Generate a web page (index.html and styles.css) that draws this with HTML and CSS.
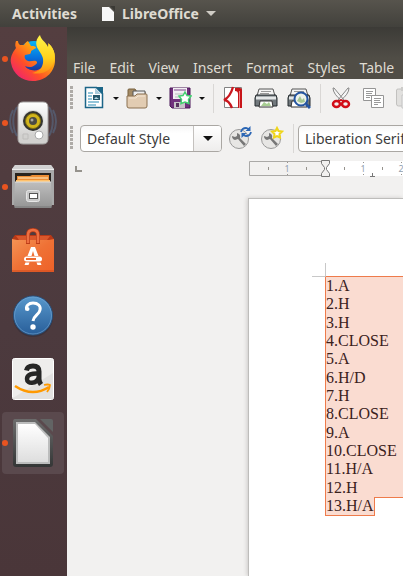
FILE: index.html
```html
<!DOCTYPE html>
<html lang="en">
<head>
<meta charset="utf-8">
<meta name="viewport" content="width=device-width, initial-scale=1">
<title>LibreOffice</title>
<link rel="stylesheet" href="styles.css">
</head>
<body>
<header class="topbar">
  <button class="topbar-item">Activities</button>
  <button class="topbar-item app">
    <svg width="14" height="16" viewBox="0 0 14 16"><path d="M1 1h7l5 5v9H1z" fill="#f7f7f7"/><path d="M9 0h5v5z" fill="#3a3934"/></svg>
    <span>LibreOffice</span>
    <svg width="10" height="5" viewBox="0 0 10 5"><path d="M0 0h10L5 5z" fill="#cfccc5"/></svg>
  </button>
</header>
<div class="desktop">
  <nav class="dock" aria-label="Dock">
    <button class="launcher running" aria-label="Firefox">
      <svg width="48" height="48" viewBox="0 0 48 48">
        <defs>
          <linearGradient id="fx" x1="1" y1="0" x2="0" y2="1"><stop offset="0" stop-color="#ffe52e"/><stop offset=".35" stop-color="#ff9f12"/><stop offset=".62" stop-color="#ff4f28"/><stop offset="1" stop-color="#e8128b"/></linearGradient>
          <linearGradient id="fb" x1="0" y1="0" x2="0" y2="1"><stop offset="0" stop-color="#08b6f5"/><stop offset=".5" stop-color="#0870dc"/><stop offset="1" stop-color="#252080"/></linearGradient>
          <linearGradient id="fy" x1="0" y1="0" x2="0" y2="1"><stop offset="0" stop-color="#fff44a"/><stop offset=".6" stop-color="#ffd21c"/><stop offset="1" stop-color="#ff8b16"/></linearGradient>
        </defs>
        <circle cx="25" cy="23" r="17" fill="url(#fb)"/>
        <path d="M7 6C6 9 6 11 7 13 3 18 1 23 2 28c2 11 11 18 22 18 13 0 23-10 22-23 0-6-3-12-7-15 1 8 0 19-5 24-6 6-16 3-18-1 4 2 8 1 10-1 2-1 3-3 1-4-3-1-5 1-8 0-3-1-4-4-3-6l5-1c1-1 1-2 1-3l5-3c0-2-3-2-5-2l-3-5c-2 1-3 2-4 4-2 0-3 0-4 0-1-1-2-2-2-4z" fill="url(#fx)"/>
        <path d="M31 0c-4 4-5 9-2 14 3 5 6 8 5 14-1 6-5 9-11 10 9 2 16-1 20-7 5-8 3-17-3-22l-1 3c-2-5-7-7-8-12z" fill="url(#fy)"/>
      </svg>
    </button>
    <button class="launcher running" aria-label="Rhythmbox">
      <svg width="48" height="48" viewBox="0 0 48 48">
        <defs><linearGradient id="sp" x1="0" y1="0" x2="0" y2="1"><stop offset="0" stop-color="#ffffff"/><stop offset="1" stop-color="#c7c6c4"/></linearGradient></defs>
        <g fill="none" stroke="#58799e" stroke-width="2" opacity=".45"><path d="M8 8c-5 8-5 20 0 29M4 11c-4 7-4 16 0 23M40 8c5 8 5 20 0 29M44 11c4 7 4 16 0 23"/></g>
        <path d="M9 8q0-5 5-5h20q5 0 5 5v32q0 5-5 5H14q-5 0-5-5z" fill="url(#sp)" stroke="#a5a3a2"/>
        <path d="M10 36h28v5q0 3-4 3H14q-4 0-4-3z" fill="#d2d1cf"/>
        <circle cx="24" cy="22" r="11" fill="#dcdcda"/><circle cx="24" cy="22" r="10" fill="#353530"/><circle cx="24" cy="22" r="7.500" fill="#d2b51c" stroke="#80700f"/><circle cx="24" cy="22" r="4" fill="#4b4b44"/><circle cx="23" cy="21" r="1.500" fill="#a9a8a2"/>
        <circle cx="30" cy="36" r="4" fill="#fff" stroke="#aaa"/><path d="M14 35h5v5h-5z" fill="none" stroke="#bebdbb"/>
      </svg>
    </button>
    <button class="launcher running" aria-label="Files">
      <svg width="48" height="48" viewBox="0 0 48 48">
        <defs><linearGradient id="fc" x1="0" y1="0" x2="0" y2="1"><stop offset="0" stop-color="#bebebe"/><stop offset="1" stop-color="#949494"/></linearGradient></defs>
        <path d="M6 2h36l3 4v36H3V6z" fill="#a9a9a9"/><path d="M6 2h36l3 4H3z" fill="#d2d2d2"/><path d="M3 6h42v1H3z" fill="#eee"/>
        <path d="M6 10h36v10H6z" fill="#28231e"/><path d="M8 13h13l2-1h17v7H8z" fill="#ed8e35"/><path d="M9 15h30" stroke="#fff0cc" stroke-width="1"/><path d="M7 17h34v2H7z" fill="#ffc16b"/>
        <path d="M6 19h36l1 23-1 3H6l-1-3z" fill="url(#fc)"/><path d="M6 19h36" stroke="#dedede"/><path d="M5 44h38" stroke="#777"/>
        <rect x="17.500" y="27.500" width="13" height="11" rx="2" fill="#c9c9c9" stroke="#e7e7e7"/><rect x="20.500" y="30.500" width="8" height="5" fill="#fff" stroke="#555"/>
      </svg>
    </button>
    <button class="launcher" aria-label="Ubuntu Software">
      <svg width="48" height="48" viewBox="0 0 48 48">
        <defs><linearGradient id="sw" x1="0" y1="0" x2="1" y2="1"><stop offset="0" stop-color="#f49455"/><stop offset=".5" stop-color="#ef7135"/><stop offset="1" stop-color="#ee6128"/></linearGradient></defs>
        <path d="M3 12l3-4h36l3 4v4H3z" fill="#b83917"/><path d="M7 9h34l-3 4H10z" fill="#d9572b"/>
        <path d="M3 12l5 1h32l5-1v33H3z" fill="url(#sw)"/><path d="M3 44h42" stroke="#cc4a1e"/>
        <path d="M19 17V8q0-5 5-5t5 5v9" fill="none" stroke="#bd3d18" stroke-width="4"/><path d="M19 16V8q0-5 5-5t5 5v8" fill="none" stroke="#ed7042" stroke-width="2.500"/>
        <path d="M18.500 29l3.500-9h4l3.500 9h-4L24 24l-1.500 5zM15.500 38l1-2.500h4l-1 2.500zM32.500 38l-1-2.500h-4l1 2.500z" fill="#fff"/><rect x="15" y="29.500" width="18" height="5" rx="2.500" fill="#fff"/><path d="M17 32h10" stroke="#ed6a30" stroke-width="2"/>
      </svg>
    </button>
    <button class="launcher" aria-label="Help">
      <svg width="48" height="48" viewBox="0 0 48 48">
        <defs><linearGradient id="hp" x1="0" y1="0" x2="0" y2="1"><stop offset="0" stop-color="#5898cc"/><stop offset="1" stop-color="#285e99"/></linearGradient></defs>
        <circle cx="24" cy="26" r="20" fill="#302c38" opacity=".5"/><circle cx="24" cy="24.500" r="19.500" fill="url(#hp)" stroke="#264f7c"/><circle cx="24" cy="24.500" r="18.500" fill="none" stroke="#76a9d3" opacity=".6"/>
        <path d="M18 19c-2-4 2-7 6-7 5 0 8 3 7 7-1 5-6 5-7 11" fill="none" stroke="#fff" stroke-width="3"/><circle cx="18.500" cy="18" r="2" fill="#fff"/><circle cx="24" cy="36" r="2.700" fill="#fff"/>
      </svg>
    </button>
    <button class="launcher" aria-label="Amazon">
      <svg width="48" height="48" viewBox="0 0 48 48">
        <rect x="3.500" y="3.500" width="41" height="41" rx="2" fill="#eeedec" stroke="#fff"/><path d="M4 43L44 18v26H4z" fill="#e2e1e0"/>
        <path d="M17.500 15.500c.5-3 3-4.500 6.500-4.500 4 0 6 2 6 5.500v7.500c0 2.500.5 3.500 2 5.500" fill="none" stroke="#262626" stroke-width="5"/>
        <path d="M30 18.500c-7-.5-12 1-12 5.500 0 5.500 9.500 5 11.500-1" fill="none" stroke="#262626" stroke-width="4.500"/>
        <path d="M6 31c12 8 23 8 34 1" fill="none" stroke="#ff9900" stroke-width="2.500"/><path d="M35 30q4-1 6 0 0 3-3 7" fill="none" stroke="#ff9900" stroke-width="1.800"/>
      </svg>
    </button>
    <button class="launcher running active" aria-label="LibreOffice">
      <svg width="48" height="48" viewBox="0 0 48 48">
        <defs><linearGradient id="lo" x1="0" y1="0" x2="0" y2="1"><stop offset="0" stop-color="#6c6c6c"/><stop offset="1" stop-color="#343636"/></linearGradient><linearGradient id="lp" x1="0" y1="0" x2="0" y2="1"><stop offset="0" stop-color="#fff"/><stop offset="1" stop-color="#dedede"/></linearGradient></defs>
        <path d="M6 0h21l17 17v28q0 3-3 3H7q-3 0-3-3V3q0-3 2-3z" fill="url(#lo)"/><path d="M31 0h11q2 0 2 2v11z" fill="#626464"/>
        <path d="M7 3h19l15 15v27H7z" fill="#bcbdbd"/><path d="M9 5h17l13 14v24H9z" fill="url(#lp)"/>
      </svg>
    </button>
  </nav>
  <main class="window">
    <nav class="menubar" aria-label="Menu">
      <button>File</button><button>Edit</button><button>View</button><button>Insert</button><button>Format</button><button>Styles</button><button>Table</button>
    </nav>
    <div class="toolbar standard">
      <span class="grip"></span>
      <button class="tool" aria-label="New"><svg width="24" height="24" viewBox="0 0 24 24"><path d="M3.500 1.500h11l6 6v14h-17z" fill="#fff" stroke="#1c6688" stroke-width="1.500"/><path d="M13 1h8v8z" fill="#1c6688"/><path d="M13 2v6h6z" fill="#a9cbdc"/><path d="M6 7h5M6 10h4M6 13h4M6 16h11M6 19h8" stroke="#268bb5"/><path d="M11 9h7v5h-7z" fill="#24576c"/><path d="M12 13l2-2 3 2z" fill="#b8dae5"/></svg></button>
      <button class="drop" aria-label="New options"></button>
      <button class="tool" aria-label="Open"><svg width="24" height="24" viewBox="0 0 24 24"><path d="M3 20V4q0-1 1-1h6l2 3h8v14z" fill="#a38a65" stroke="#78613f"/><path d="M8 5h12v8H8z" fill="#eee" stroke="#555"/><path d="M2 10h8l2-2h9q1 0 1 1v11q0 2-2 2H4q-2 0-2-2z" fill="#e2ccb2" stroke="#8b7150"/><path d="M4 12h7l2-2h7" fill="none" stroke="#f5e6d3"/></svg></button>
      <button class="drop" aria-label="Open options"></button>
      <button class="tool" aria-label="Save"><svg width="24" height="24" viewBox="0 0 24 24"><path d="M2 2h20v20H4l-2-2z" fill="#71307d" stroke="#4b1758"/><path d="M5 2h14v11H5z" fill="#f2eff3"/><path d="M6 3h12v2H6z" fill="#b89bbf"/><path d="M7 8h8M7 11h6" stroke="#bbb"/><path d="M6 16h11v6H6z" fill="#c8c3c9"/><path d="M8 17h3v4H8z" fill="#58305f"/><path d="M17 6l2 3.500 4 .5-2.500 3.500.5 4-4-1.500-4 1.500.5-4L11 10l4-.5z" fill="#fff" stroke="#43d070" stroke-width="1.500"/></svg></button>
      <button class="drop" aria-label="Save options"></button>
      <span class="divider"></span>
      <button class="tool" aria-label="Export as PDF"><svg width="24" height="24" viewBox="0 0 24 24"><path d="M3.500 1.500h17v20h-17z" fill="#fff" stroke="#828282"/><path d="M14 2q7-1 7 2v18h-4V8q0-3-3-3z" fill="#c81519"/><path d="M12 1C10 8 7 12 3 14c4 0 6 3 8 8" fill="none" stroke="#c9171e" stroke-width="2.300"/><path d="M18.500 5v17" stroke="#e98a8c" stroke-width="1"/></svg></button>
      <button class="tool" aria-label="Print"><svg width="24" height="24" viewBox="0 0 24 24"><path d="M5 3h14l2 7H3z" fill="#f4f4f4" stroke="#555"/><path d="M7 5.500h10M6 7.500h9" stroke="#999"/><path d="M2 9h20l1 3v8H1v-8z" fill="#71787c" stroke="#252b2e"/><path d="M2 12h20" stroke="#e4e7e8" stroke-width="3"/><path d="M6 15h12l1 6H5z" fill="#fff" stroke="#333"/><path d="M7 20l3-4 3 2 2-2 2 4z" fill="#a8ce93"/></svg></button>
      <button class="tool" aria-label="Print preview"><svg width="24" height="24" viewBox="0 0 24 24"><path d="M5 3h14l2 7H3z" fill="#f4f4f4" stroke="#555"/><path d="M7 5.500h10" stroke="#999"/><path d="M2 9h20l1 3v8H1v-8z" fill="#71787c" stroke="#252b2e"/><path d="M2 12h20" stroke="#e4e7e8" stroke-width="3"/><path d="M5 15h14l1 6H4z" fill="#fff" stroke="#333"/><circle cx="14" cy="13" r="6.500" fill="#edf2ec" stroke="#2454a0" stroke-width="2"/><path d="M19 18l4 4" stroke="#2454a0" stroke-width="3"/><path d="M10 15l3-5 2 4 2-2 1 4-4 1z" fill="#a5c792"/></svg></button>
      <span class="divider wide"></span>
      <button class="tool" aria-label="Cut"><svg width="24" height="24" viewBox="0 0 24 24"><path d="M5 2q0 6 9 13l2-1L6 2zM21 2q0 6-9 13l-2-1L20 2z" fill="#f5f5f5" stroke="#878787"/><ellipse cx="8.500" cy="18" rx="3.500" ry="3" fill="none" stroke="#d20d18" stroke-width="2.500"/><ellipse cx="17.500" cy="18" rx="3.500" ry="3" fill="none" stroke="#d20d18" stroke-width="2.500"/><path d="M10 15l3-1 3 1" fill="none" stroke="#d20d18" stroke-width="1.500"/></svg></button>
      <button class="tool" aria-label="Copy"><svg width="24" height="24" viewBox="0 0 24 24"><path d="M2.500 2.500h12v12h-12z" fill="#fff" stroke="#959595"/><path d="M5 5.500h7M5 7.500h6M5 9.500h7M5 11.500h4" stroke="#999"/><path d="M10.500 9.500h12v12h-12z" fill="#fff" stroke="#959595"/><path d="M13 12.500h7M13 14.500h6M13 16.500h7M13 18.500h4" stroke="#999"/></svg></button>
      <button class="tool faded" aria-label="Paste" disabled><svg width="24" height="24" viewBox="0 0 24 24"><path d="M2.500 4q0-1 2-1h15v17h-15q-2 0-2-2z" fill="#dddcda" stroke="#b7b6b4"/><path d="M7 1h9v4H7z" fill="#c4c3c1"/><path d="M8 9h15v13H8z" fill="#eee" stroke="#bbb"/></svg></button>
    </div>
    <div class="toolbar formatting">
      <span class="grip"></span>
      <label class="combo"><select aria-label="Paragraph style"><option>Default Style</option></select><span class="combo-arrow"></span></label>
      <button class="tool" aria-label="Update style"><svg width="24" height="24" viewBox="0 0 24 24"><circle cx="11" cy="13" r="9.500" fill="#e7e6e4" stroke="#999"/><path d="M4 10q0 3 3 4l3-1 6 7 2-2-6-6q1-4-3-5v3l-2 1z" fill="#777"/><path d="M13 6q1-4 5-4l3 1M23 6q-1 4-5 4l-3-1" fill="none" stroke="#2c67b5" stroke-width="1.800"/><path d="M22.500 0v5h-5zM13.500 12V7h5z" fill="#2c67b5"/></svg></button>
      <button class="tool" aria-label="New style"><svg width="24" height="24" viewBox="0 0 24 24"><circle cx="11" cy="13" r="9.500" fill="#e7e6e4" stroke="#999"/><path d="M4 10q0 3 3 4l3-1 6 7 2-2-6-6q1-4-3-5v3l-2 1z" fill="#777"/><path d="M17 2l1.500 3 3.500.5-2.500 2.500.5 3.500-3-1.500-3 1.500.5-3.500L12 5.500l3.500-.5z" fill="#fff" stroke="#efd51a" stroke-width="2"/></svg></button>
      <span class="divider"></span>
      <label class="combo font"><select aria-label="Font name"><option>Liberation Serif</option></select></label>
    </div>
    <div class="ruler">
      <svg class="tabstop" width="7" height="6" viewBox="0 0 7 6"><path d="M1 0v5h6" fill="none" stroke="#96938d" stroke-width="2"/></svg>
      <div class="scale">
        <svg width="160" height="18" viewBox="0 0 160 18">
          <path d="M76 1h84v15H76z" fill="#fff"/><path d="M.500 1.500h76v14H.500z" fill="#f2f1f0" stroke="#aaa9a7"/>
          <path d="M19.500 7v3M57.500 7v3M95.500 7v3M133.500 7v3M38.500 2v1M38.500 14v1M114.500 2v1M114.500 14v1M152.500 2v1M152.500 14v1" stroke="#96938d"/>
          <text x="38" y="12">1</text><text x="114" y="12">1</text><text x="152" y="12">2</text>
          <path d="M72.500.500h8v3l-3 4v2l3 4v3h-8v-3l3-4v-2l-3-4z" fill="#f2f1f0" stroke="#777"/>
          <path d="M121 16.500h5M123.500 13v4" stroke="#777"/>
        </svg>
      </div>
    </div>
    <section class="canvas">
      <article class="page">
        <svg class="cropmark" width="14" height="14" viewBox="0 0 14 14"><path d="M13.500 0v13.500H0" fill="none" stroke="#c8c8c8"/></svg>
        <div class="selection">
          <p>1.A</p><p>2.H</p><p>3.H</p><p>4.CLOSE</p><p>5.A</p><p>6.H/D</p><p>7.H</p><p>8.CLOSE</p><p>9.A</p><p>10.CLOSE</p><p>11.H/A</p><p>12.H</p>
          <p class="last"><span>13.H/A</span></p>
        </div>
      </article>
    </section>
  </main>
</div>
</body>
</html>
```
FILE: styles.css
```css
* { box-sizing: border-box; }
body {
  margin: 0;
  height: 100vh;
  display: flex;
  flex-direction: column;
  overflow: hidden;
  font: 14px "Noto Sans", sans-serif;
}
button {
  border: 0;
  padding: 0;
  background: none;
  font: inherit;
  color: inherit;
  white-space: nowrap;
}
svg { display: block; flex: none; }
.topbar {
  flex: none;
  height: 27px;
  display: flex;
  align-items: center;
  gap: 24px;
  padding: 0 12px;
  background: linear-gradient(#57544d, #42413c);
  color: #dfdbd2;
  font-weight: 700;
}
.app { display: flex; align-items: center; gap: 7px; }
.desktop { flex: 1; min-height: 0; display: flex; }
.dock {
  flex: none;
  width: 67px;
  display: flex;
  flex-direction: column;
  gap: 2px;
  padding: 1px 2px;
  background: linear-gradient(#543e40, #4c3a3e 55%, #4a3639);
}
.launcher {
  position: relative;
  flex: none;
  width: 62px;
  height: 62px;
  display: grid;
  place-items: center;
  border-radius: 4px;
}
.launcher.active { background: #5a494d; }
.running::before {
  content: "";
  position: absolute;
  left: 0;
  top: 28px;
  width: 6px;
  height: 6px;
  border-radius: 50%;
  background: #e95420;
}
.window {
  flex: 1;
  min-width: 0;
  display: flex;
  flex-direction: column;
  overflow: hidden;
  background: #f2f1f0;
}
.menubar {
  flex: none;
  height: 52px;
  display: flex;
  align-items: flex-end;
  gap: 14px;
  padding: 0 6px 2px;
  background: linear-gradient(#3c3b37, #504d46 60%, #504d46);
  color: #dfdbd2;
}
.toolbar { flex: none; display: flex; align-items: center; padding-left: 3px; }
.standard { height: 38px; }
.formatting { height: 42px; }
.tool { flex: none; width: 24px; height: 24px; }
.faded { opacity: 0.8; }
.tool + .tool { margin-left: 9px; }
.grip {
  flex: none;
  width: 3px;
  height: 24px;
  margin-right: 9px;
  background: repeating-linear-gradient(#aeaba7 0 3px, transparent 3px 4px);
}
.formatting .grip { margin-right: 7px; }
.drop { flex: none; width: 19px; height: 24px; display: grid; place-items: center; }
.drop::before, .combo-arrow::before {
  content: "";
  border: 3px solid transparent;
  border-top-color: #111;
  border-bottom: 0;
}
.divider { flex: none; width: 1px; height: 29px; margin: 0 7px 0 2px; background: #d9d7d5; }
.divider.wide { margin-left: 9px; }
.combo {
  flex: none;
  display: flex;
  width: 142px;
  height: 27px;
  overflow: hidden;
  border: 1px solid #aaa7a3;
  border-radius: 4px;
  background: linear-gradient(#f7f7f7, #fff 30%);
}
.combo select {
  flex: 1;
  min-width: 0;
  appearance: none;
  border: 0;
  padding: 0 6px;
  background: none;
  font: inherit;
  color: #3c3c3c;
}
.combo-arrow {
  width: 28px;
  display: grid;
  place-items: center;
  border-left: 1px solid #c4c1be;
  background: linear-gradient(#fff, #eeedec);
}
.combo-arrow::before { border-width: 5px 5px 0; }
.combo + .tool { margin-left: 6px; }
.formatting .tool + .tool { margin-left: 8px; }
.formatting .divider { margin: 0 4px 0 9px; }
.ruler { flex: none; display: flex; align-items: center; height: 18px; margin-top: 1px; padding-left: 8px; }
.scale { flex: 1; margin-left: 167px; background: linear-gradient(#fff, #fff) 76px 1px / 100% 15px no-repeat; }
.scale text { font: 9px "Noto Sans", sans-serif; fill: #93a1b0; text-anchor: middle; }
.canvas { flex: 1; min-height: 0; padding: 20px 0 0 181px; }
.page {
  height: 100%;
  padding: 64px 0 0 63px;
  border: 1px solid #bebdbb;
  border-width: 1px 0 0 1px;
  background: #fff;
  box-shadow: -1px 0 4px #cccac8;
}
.selection {
  height: 240px;
  margin: -1px 0 0 13px;
  display: grid;
  grid-auto-rows: 1fr;
  border: 1px solid #ee7b4b;
  border-width: 1px 0 0 1px;
  font: 16px/18px "Liberation Serif", serif;
  color: #3a211c;
}
.selection p { margin: 0; background: #fadcd1; white-space: nowrap; }
.selection .last { display: flex; background: none; }
.last span { background: #fadcd1; border: 1px solid #ee7b4b; border-width: 0 1px 1px 0; }
.last::after { content: ""; flex: 1; border-top: 1px solid #ee7b4b; }
```
